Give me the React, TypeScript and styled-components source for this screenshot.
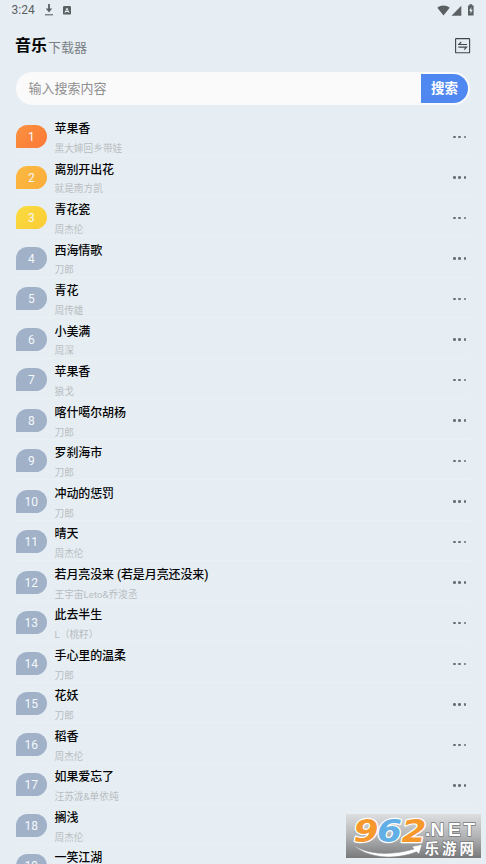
import React from 'react';
import styled, { createGlobalStyle } from 'styled-components';

const GlobalStyle = createGlobalStyle`
  * { box-sizing: border-box; }
  html, body { margin: 0; background: #e6eef5; overflow: hidden; }
  body { font-family: Roboto, "Noto Sans CJK SC", sans-serif; }
`;

const Screen = styled.div`
  position: relative;
  width: 486px;
  height: 864px;
  overflow: hidden;
  background: #e6eef4;
`;

const StatusBar = styled.div`
  display: flex;
  align-items: center;
  height: 20px;
  padding: 0 11px 0 11.5px;
  color: #5b6063;
`;

const Clock = styled.span`
  font-size: 12px;
  line-height: 20px;
  width: 31px;
`;

const StatusIcon = styled.svg<{ $ml?: number }>`
  display: block;
  flex: none;
  margin-left: ${(p) => p.$ml ?? 0}px;
`;

const Spacer = styled.div`
  flex: 1;
`;

const Header = styled.header`
  display: flex;
  align-items: center;
  justify-content: space-between;
  height: 52px;
  padding: 0 15px;
`;

const Brand = styled.h1`
  display: flex;
  align-items: baseline;
  margin: 1px 0 0;
  font-size: 16px;
  line-height: 24px;
  font-weight: 700;
  color: #050505;
`;

const BrandSuffix = styled.span`
  position: relative;
  top: 1px;
  margin-left: 1px;
  font-size: 13px;
  font-weight: 400;
  color: #7c8185;
`;

const SearchBar = styled.div`
  display: flex;
  align-items: center;
  height: 33px;
  margin: 0 16px;
  padding: 0 2px 0 12.5px;
  border-radius: 17px;
  background: #fafafa;
`;

const Placeholder = styled.span`
  flex: 1;
  font-size: 13px;
  line-height: 20px;
  color: #8f8f8f;
`;

const SearchButton = styled.button`
  width: 47px;
  height: 29px;
  padding: 0;
  border: 0;
  border-radius: 0 15px 15px 0;
  background: #5088f1;
  color: #fff;
  font: 700 13.5px/29px Roboto, "Noto Sans CJK SC", sans-serif;
`;

const SongList = styled.ol`
  list-style: none;
  margin: 10.5px 16px 0;
  padding: 0;
`;

const SongRow = styled.li`
  display: flex;
  align-items: flex-start;
  height: 40.53px;
  border-bottom: 1px solid #e9f1f2;
`;

const Rank = styled.div<{ $fill: string }>`
  width: 30.5px;
  height: 23px;
  margin-top: 9.5px;
  border-radius: 12px 12px 12px 0;
  background: ${(p) => p.$fill};
  color: #f5f8fb;
  font-size: 12px;
  line-height: 24px;
  text-align: center;
`;

const SongText = styled.div`
  flex: 1;
  margin-left: 8px;
  white-space: nowrap;
`;

const Title = styled.div`
  margin-top: 4.6px;
  font-size: 12px;
  letter-spacing: -0.1px;
  font-weight: 500;
  line-height: 18px;
  color: #050505;
`;

const Artist = styled.div`
  margin-top: 3.8px;
  font-size: 9.7px;
  line-height: 14px;
  color: #b9bdc0;
`;

const More = styled.div`
  display: flex;
  gap: 2.7px;
  margin: 20.3px 4px 0 0;
`;

const Dot = styled.i`
  width: 2.5px;
  height: 2.5px;
  border-radius: 50%;
  background: #697075;
`;

const Watermark = styled.svg`
  position: absolute;
  left: 346px;
  top: 814px;
`;

const songs: [string, string][] = [
  ['苹果香', '黑大婶回乡带娃'],
  ['离别开出花', '就是南方凯'],
  ['青花瓷', '周杰伦'],
  ['西海情歌', '刀郎'],
  ['青花', '周传雄'],
  ['小美满', '周深'],
  ['苹果香', '狼戈'],
  ['喀什噶尔胡杨', '刀郎'],
  ['罗刹海市', '刀郎'],
  ['冲动的惩罚', '刀郎'],
  ['晴天', '周杰伦'],
  ['若月亮没来 (若是月亮还没来)', '王宇宙Leto&乔浚丞'],
  ['此去半生', 'L（桃籽）'],
  ['手心里的温柔', '刀郎'],
  ['花妖', '刀郎'],
  ['稻香', '周杰伦'],
  ['如果爱忘了', '汪苏泷&单依纯'],
  ['搁浅', '周杰伦'],
  ['一笑江湖', ''],
];

const topFills = [
  'linear-gradient(135deg, #fb923f, #fb7837)',
  'linear-gradient(135deg, #fbb941, #faad39)',
  'linear-gradient(135deg, #f9dc40, #fbcb35)',
];

export default function App() {
  return (
    <>
      <GlobalStyle />
      <Screen>
        <StatusBar>
          <Clock>3:24</Clock>
          <StatusIcon $ml={1} width="10" height="12" viewBox="0 0 10 12">
            <path d="M5 0v6" stroke="#5b6063" strokeWidth="1.8" />
            <path d="M1.8 4.6h6.4L5 8.4Z" fill="#5b6063" />
            <path d="M1 10.8h8" stroke="#5b6063" strokeWidth="1.1" />
          </StatusIcon>
          <StatusIcon $ml={9} width="8" height="9" viewBox="0 0 8 9">
            <rect width="8" height="8.6" rx="1.2" fill="#5b6063" />
            <path d="M2 6.8 4 2.2l2 4.6M2.7 5.5h2.6" fill="none" stroke="#e6eef5" strokeWidth="1" />
          </StatusIcon>
          <Spacer />
          <StatusIcon width="13" height="11" viewBox="0 0 13 11">
            <path d="M.3 2.8C3.8-.2 9.2-.2 12.7 2.8L6.5 10.6Z" fill="#5b6063" />
          </StatusIcon>
          <StatusIcon $ml={1} width="11" height="11" viewBox="0 0 11 11">
            <path d="M.5 10.7 10.3.8v9.9Z" fill="#5b6063" />
          </StatusIcon>
          <StatusIcon $ml={5} width="8" height="12" viewBox="0 0 8 12">
            <path d="M1 1.4h1.4V.3h2.8v1.1h1.4v10H1Z" fill="#5b6063" />
            <path d="M4.3 3 2.2 6.9h1.4V9.8l2.1-4H4.3Z" fill="#e6eef5" />
          </StatusIcon>
        </StatusBar>

        <Header>
          <Brand>
            音乐<BrandSuffix>下载器</BrandSuffix>
          </Brand>
          <StatusIcon width="16" height="16" viewBox="0 0 16 16" fill="none" stroke="#3f464b">
            <rect x="0.6" y="0.6" width="14" height="14.2" rx="0.4" strokeWidth="1.1" />
            <path d="M12 6.5H3.8L6.2 4M3.4 9.1h8.2L9.2 11.6" strokeWidth="1.1" />
          </StatusIcon>
        </Header>

        <SearchBar>
          <Placeholder>输入搜索内容</Placeholder>
          <SearchButton>搜索</SearchButton>
        </SearchBar>

        <SongList>
          {songs.map(([title, artist], i) => (
            <SongRow key={i}>
              <Rank $fill={topFills[i] ?? '#a0b1c8'}>{i + 1}</Rank>
              <SongText>
                <Title>{title}</Title>
                <Artist>{artist}</Artist>
              </SongText>
              <More>
                <Dot />
                <Dot />
                <Dot />
              </More>
            </SongRow>
          ))}
        </SongList>

        <Watermark width="135" height="44" viewBox="0 0 135 44">
          <defs>
            <linearGradient id="plate" x1="0" y1="0" x2="0" y2="1">
              <stop offset="0" stopColor="#dcdee0" />
              <stop offset="0.5" stopColor="#b2b4b6" />
              <stop offset="1" stopColor="#77797b" />
            </linearGradient>
          </defs>
          <rect width="135" height="44" fill="url(#plate)" />
          <g
            fontFamily="DejaVu Sans, sans-serif"
            fontWeight="700"
            fontStyle="italic"
            fontSize="32"
            stroke="#fff"
            strokeWidth="2.4"
            strokeLinejoin="round"
            paintOrder="stroke"
          >
            <text x="7.5" y="28" textLength="25" lengthAdjust="spacingAndGlyphs" fill="#f6982c">9</text>
            <text x="31" y="28" textLength="25" lengthAdjust="spacingAndGlyphs" fill="#62afe6">6</text>
            <text x="55.5" y="28" textLength="25" lengthAdjust="spacingAndGlyphs" fill="#f6982c">2</text>
          </g>
          <path d="M7 31C24 42 48 41 68 35L66 32.5 76 30.5 73 40 70.5 37.8C50 46 23 45 7 31Z" fill="#fff" stroke="#8b8d8f" strokeWidth="0.5" />
          <g fill="#fff" stroke="#77797b" strokeWidth="1.4" paintOrder="stroke" fontWeight="700">
            <text y="22" x="79 84.5 102 117.5" fontFamily="Liberation Sans, sans-serif" fontSize="19">
              .NET
            </text>
            <text y="39.5" x="78.5 96 113.5" fontFamily="Noto Sans CJK SC, sans-serif" fontSize="14.5">
              乐游网
            </text>
          </g>
        </Watermark>
      </Screen>
    </>
  );
}
